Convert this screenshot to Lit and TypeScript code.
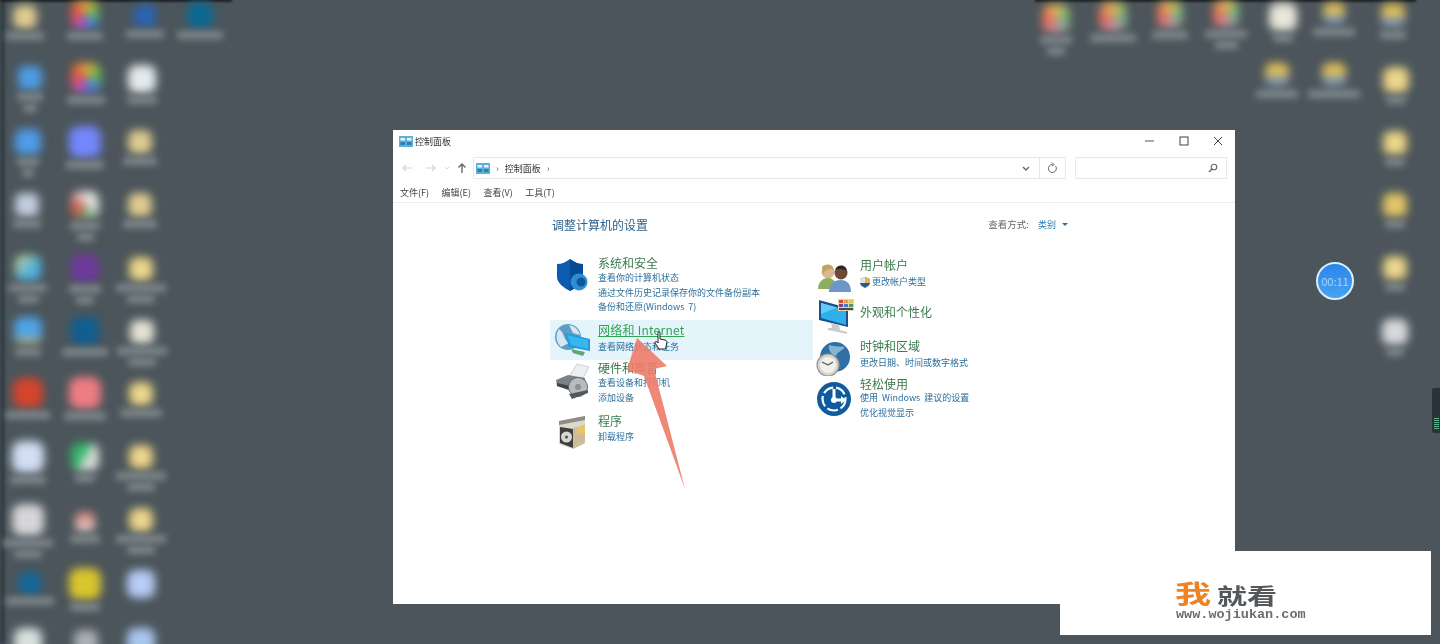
import { LitElement, html, css, svg, nothing } from 'lit';
import { customElement } from 'lit/decorators.js';

type Blob = { x: number; y: number; s: number; bg: string; w?: number; lines?: number };

const rainbow = 'conic-gradient(#e8a33c, #6cc04a, #3e7fe0, #c84fb0, #e2503c, #e8a33c)';
const chrome = 'conic-gradient(#e9c04d, #66b184, #c98fa0, #e3645a, #e9c04d)';
const yellow = 'radial-gradient(circle, #ecd88e 40%, #d8bd6c)';
const tan = 'radial-gradient(circle, #e0cd90 40%, #c9b98a)';
const person = 'linear-gradient(#e2c257 55%, #7f93ab 55%)';

// desktop icons, x/y are the centre of the icon itself
const blobs: Blob[] = [
  { x: 25, y: 17, s: 24, bg: tan, w: 38 },
  { x: 85, y: 15, s: 28, bg: rainbow, w: 36 },
  { x: 145, y: 16, s: 22, bg: '#2a64b4', w: 38 },
  { x: 200, y: 15, s: 26, bg: '#0a6a92', w: 46 },
  { x: 30, y: 78, s: 24, bg: '#4e9de4', w: 26, lines: 2 },
  { x: 86, y: 78, s: 30, bg: rainbow, w: 38 },
  { x: 142, y: 79, s: 28, bg: '#e4ebeb', w: 30 },
  { x: 28, y: 142, s: 26, bg: '#4f9ce8', w: 22, lines: 2 },
  { x: 85, y: 142, s: 32, bg: '#7387fb', w: 38 },
  { x: 140, y: 142, s: 24, bg: tan, w: 34 },
  { x: 27, y: 205, s: 24, bg: '#c3cde0', w: 28 },
  { x: 85, y: 205, s: 28, bg: 'conic-gradient(#ddd, #ddd 30%, #6fae7b 45%, #d9503f 70%, #ddd)', w: 30, lines: 2 },
  { x: 140, y: 205, s: 24, bg: tan, w: 34 },
  { x: 28, y: 268, s: 26, bg: 'linear-gradient(135deg, #d8d890, #4fb0dc 60%)', w: 38, lines: 2 },
  { x: 85, y: 268, s: 28, bg: '#6f3a9c', w: 32, lines: 2 },
  { x: 141, y: 269, s: 24, bg: yellow, w: 50, lines: 2 },
  { x: 28, y: 331, s: 28, bg: 'linear-gradient(#4ea4e8 60%, #c8a95a)', w: 26 },
  { x: 85, y: 331, s: 28, bg: '#0f5f92', w: 46 },
  { x: 142, y: 332, s: 24, bg: '#e3e2d3', w: 50, lines: 2 },
  { x: 28, y: 393, s: 30, bg: '#d5442b', w: 44 },
  { x: 85, y: 393, s: 32, bg: '#ee7d83', w: 42 },
  { x: 141, y: 394, s: 24, bg: yellow, w: 42 },
  { x: 28, y: 457, s: 32, bg: '#d2def4', w: 36 },
  { x: 85, y: 457, s: 28, bg: 'linear-gradient(120deg, #35b768 45%, #d8dcd8 55%)', w: 20 },
  { x: 141, y: 457, s: 24, bg: yellow, w: 50, lines: 2 },
  { x: 28, y: 520, s: 32, bg: '#d6d6d8', w: 50, lines: 2 },
  { x: 85, y: 522, s: 20, bg: 'linear-gradient(#d77f78, #e0d4cc)', w: 30 },
  { x: 141, y: 520, s: 24, bg: yellow, w: 50, lines: 2 },
  { x: 30, y: 583, s: 22, bg: '#12699b', w: 48 },
  { x: 85, y: 584, s: 32, bg: '#d8c52f', w: 30 },
  { x: 141, y: 584, s: 28, bg: '#b7ccf6', w: 0 },
  { x: 28, y: 642, s: 28, bg: '#d8e0de' },
  { x: 86, y: 642, s: 24, bg: '#aab0b4' },
  { x: 141, y: 642, s: 28, bg: '#a9c6ee' },
  { x: 1056, y: 19, s: 28, bg: chrome, w: 32, lines: 2 },
  { x: 1113, y: 17, s: 28, bg: chrome, w: 46 },
  { x: 1170, y: 15, s: 26, bg: chrome, w: 36 },
  { x: 1226, y: 14, s: 26, bg: chrome, w: 42, lines: 2 },
  { x: 1283, y: 17, s: 28, bg: '#e9e6da', w: 20 },
  { x: 1334, y: 14, s: 22, bg: person, w: 42 },
  { x: 1393, y: 16, s: 24, bg: person, w: 26 },
  { x: 1277, y: 75, s: 24, bg: person, w: 42 },
  { x: 1334, y: 75, s: 24, bg: person, w: 52 },
  { x: 1396, y: 80, s: 26, bg: yellow, w: 20 },
  { x: 1395, y: 143, s: 24, bg: yellow, w: 20 },
  { x: 1395, y: 205, s: 24, bg: '#e2c566', w: 20 },
  { x: 1395, y: 268, s: 24, bg: yellow, w: 20 },
  { x: 1395, y: 332, s: 26, bg: '#d9d9dc', w: 18 },
];

const panelIcon = svg`<svg width="14" height="11" viewBox="0 0 14 11"><rect width="14" height="11" fill="#5fb0d8"/><rect x="1.5" y="2" width="4.5" height="2.5" fill="#e8f4fa"/><rect x="8" y="2" width="4.5" height="2.5" fill="#e8f4fa"/><rect x="1.5" y="6" width="4.5" height="3" fill="#2c7fae"/><rect x="8" y="6" width="4.5" height="3" fill="#2c7fae"/></svg>`;

const icons: Record<string, unknown> = {
  shield: svg`<svg width="36" height="36" viewBox="0 0 36 36">
    <path d="M3 6 C8 6 12 4 16 1 C20 4 24 6 29 6 V19 C29 25 22 30 16 33 C10 30 3 25 3 19 Z" fill="#0b5cb0"/>
    <path d="M16 1 C20 4 24 6 29 6 V19 C29 25 22 30 16 33 Z" fill="#084a94"/>
    <circle cx="25" cy="24" r="8.5" fill="#2b8ed6"/>
    <circle cx="27" cy="24" r="4.5" fill="#0f5a96"/>
  </svg>`,
  network: svg`<svg width="38" height="34" viewBox="0 0 38 34">
    <circle cx="15" cy="14" r="13" fill="#5e9dc6"/>
    <path d="M6 6 C12 10 10 17 16 20 L8 24 C3 19 2 12 6 6 Z M16 2 C22 3 26 7 27 12 L20 10 Z" fill="#d7e7ef"/>
    <path d="M12 10 L37 16 V28 L16 24 Z" fill="#1f9be0"/>
    <path d="M14 12 L35 17 V26 L18 22 Z" fill="#38b6f0"/>
    <path d="M18 26 L32 29 L30 33 L20 30 Z" fill="#5aa878"/>
  </svg>`,
  printer: svg`<svg width="36" height="36" viewBox="0 0 36 36">
    <path d="M14 14 L22 1 L34 4 L27 17 Z" fill="#eceef0" stroke="#b4b8bc" stroke-width=".6"/>
    <path d="M1 17 L13 12 L30 15 L31 23 L16 28 L2 23 Z" fill="#7c8186"/>
    <path d="M2 20 L15 23 L15 27 L2 23 Z" fill="#3f4448"/>
    <circle cx="23" cy="24" r="9.5" fill="#b9bcbf" stroke="#66696c"/>
    <circle cx="23" cy="24" r="3" fill="#8d9093"/>
    <path d="M14 31 L33 27 L33 30 L17 36 Z" fill="#54585c"/>
  </svg>`,
  program: svg`<svg width="28" height="33" viewBox="0 0 28 33">
    <path d="M1 5 L27 0 V27 L15 33 L1 28 Z" fill="#ddd9cf"/>
    <path d="M1 5 L27 0 V4 L1 9 Z" fill="#8f8c84"/>
    <path d="M15 12 L27 9 V27 L15 33 Z" fill="#c9bd9a"/>
    <path d="M19 12 L27 10 V17 L19 19 Z" fill="#ecc35c"/>
    <path d="M2 11 L15 13 V32 L2 27 Z" fill="#3d3e3e"/>
    <circle cx="8.5" cy="21" r="5.5" fill="#d6d6d2"/>
    <circle cx="8.5" cy="21" r="1.6" fill="#55564f"/>
  </svg>`,
  users: svg`<svg width="33" height="28" viewBox="0 0 33 28">
    <circle cx="10" cy="8" r="6.5" fill="#d9b98c"/>
    <path d="M4 3 C8 -1 15 0 16 6 L14 5 C10 5 7 6 5 10 Z" fill="#c4a35c"/>
    <path d="M0 25 C0 17 6 14 10 14 C15 14 19 18 19 25 Z" fill="#8fae5c"/>
    <circle cx="23" cy="9" r="6.5" fill="#6e4a34"/>
    <path d="M17 6 C19 0 28 0 29 7 C27 5 20 4 17 6 Z" fill="#2f2622"/>
    <path d="M11 28 C11 19 17 16 23 16 C29 16 33 20 33 28 Z" fill="#6c97c8"/>
  </svg>`,
  monitor: svg`<svg width="35" height="35" viewBox="0 0 35 35">
    <path d="M0 1 L29 9 V28 L0 21 Z" fill="#1d4f8a"/>
    <path d="M2 4 L27 11 V26 L2 19 Z" fill="#2fb0ec"/>
    <path d="M2 4 L18 8.5 L2 15 Z" fill="#63cbf3"/>
    <path d="M12 24 L20 26 L21 31 L28 33 L28 35 L9 31 L9 29 L13 29 Z" fill="#c8ccd0"/>
    <rect x="19" y="0" width="16" height="12" fill="#e9d3a8"/>
    <rect x="20" y="1" width="4" height="3" fill="#d8473a"/>
    <rect x="25" y="1" width="4" height="3" fill="#e7a03b"/>
    <rect x="30" y="1" width="4" height="3" fill="#e9c64a"/>
    <rect x="20" y="5" width="4" height="3" fill="#7b3f98"/>
    <rect x="25" y="5" width="4" height="3" fill="#3f7fc0"/>
    <rect x="30" y="5" width="4" height="3" fill="#4f9f5c"/>
    <rect x="20" y="9" width="14" height="2" fill="#3b4a70"/>
  </svg>`,
  clock: svg`<svg width="35" height="34" viewBox="0 0 35 34">
    <circle cx="19" cy="15" r="15" fill="#2f6fa6"/>
    <path d="M13 3 C19 5 24 4 29 5 C26 9 22 9 20 14 C16 13 12 9 13 3 Z" fill="#85b5d2"/>
    <circle cx="12" cy="23" r="11" fill="#d8d5cf" stroke="#9a9792" stroke-width="1.2"/>
    <circle cx="12" cy="23" r="8" fill="#f2f0ec"/>
    <path d="M12 23 L6 20 M12 23 L17 20" stroke="#55504a" stroke-width="1.2"/>
  </svg>`,
  access: svg`<svg width="34" height="34" viewBox="0 0 34 34">
    <circle cx="17" cy="17" r="17" fill="#105a9e"/>
    <circle cx="17" cy="17" r="11.5" fill="none" stroke="#fff" stroke-width="2.2" stroke-dasharray="11 3"/>
    <path d="M17 7 V18 H27" fill="none" stroke="#fff" stroke-width="3"/>
    <path d="M24 14 L29 18 L24 22 Z" fill="#fff"/>
    <circle cx="17" cy="18" r="3" fill="#fff"/>
  </svg>`,
};

type Cat = {
  icon: string; iconTop: number; iconLeft: number; h: number; pad: number; gap?: number;
  title: string; hover?: boolean; subs: string[];
};

const leftCats: Cat[] = [
  { icon: 'shield', iconTop: 5, iconLeft: 4, h: 67, pad: 2, gap: 1, title: '系统和安全',
    subs: ['查看你的计算机状态', '通过文件历史记录保存你的文件备份副本', '备份和还原(Windows 7)'] },
  { icon: 'network', iconTop: 3, iconLeft: 3, h: 40, pad: 2, gap: 3, title: '网络和 Internet', hover: true,
    subs: ['查看网络状态和任务'] },
  { icon: 'printer', iconTop: 3, iconLeft: 5, h: 52, pad: 0, gap: 1, title: '硬件和声音',
    subs: ['查看设备和打印机', '添加设备'] },
  { icon: 'program', iconTop: 4, iconLeft: 8, h: 40, pad: 1, gap: 2, title: '程序', subs: ['卸载程序'] },
];

const rightCats: Cat[] = [
  { icon: 'users', iconTop: 7, iconLeft: 5, h: 43, pad: 0, gap: 3, title: '用户帐户', subs: ['更改帐户类型'] },
  { icon: 'monitor', iconTop: -1, iconLeft: 6, h: 38, pad: 4, title: '外观和个性化', subs: [] },
  { icon: 'clock', iconTop: 4, iconLeft: 3, h: 38, pad: 0, gap: 3, title: '时钟和区域', subs: ['更改日期、时间或数字格式'] },
  { icon: 'access', iconTop: 6, iconLeft: 4, h: 50, pad: 0, title: '轻松使用', subs: ['使用 Windows 建议的设置', '优化视觉显示'] },
];

@customElement('app-root')
export class AppRoot extends LitElement {
  static styles = css`
    :host {
      display: block;
      font-family: 'Noto Sans CJK SC', 'Liberation Sans', sans-serif;
    }
    .desktop {
      position: relative;
      width: 1440px;
      height: 644px;
      overflow: hidden;
      background: #4b555b;
    }
    .edge {
      position: absolute;
      left: 0;
      top: 0;
      bottom: 0;
      width: 5px;
      background: #343e46;
      filter: blur(1.5px);
    }
    .topbar {
      position: absolute;
      top: -2px;
      height: 4px;
      background: #1e2327;
      filter: blur(1px);
    }
    .blob {
      position: absolute;
      display: flex;
      flex-direction: column;
      align-items: center;
      gap: 5px;
      transform: translate(-50%, 0);
    }
    .blob-icon {
      border-radius: 30%;
      filter: blur(5px);
    }
    .blob-label {
      height: 8px;
      border-radius: 2px;
      background: #80888c;
      filter: blur(3.5px);
      margin-top: -2px;
    }

    .window {
      position: absolute;
      left: 393px;
      top: 130px;
      width: 842px;
      height: 474px;
      background: #fff;
      display: flex;
      flex-direction: column;
      color: #444;
      filter: blur(0.5px);
    }
    .titlebar {
      height: 22px;
      display: flex;
      align-items: center;
      gap: 2px;
      padding-left: 6px;
      font-size: 9px;
      color: #333;
    }
    .win-ctrls {
      margin-left: auto;
      display: flex;
    }
    .win-ctrls svg {
      display: block;
      width: 34px;
      height: 22px;
    }
    .navrow {
      height: 22px;
      margin-top: 5px;
      display: flex;
      align-items: center;
    }
    .arrows {
      width: 80px;
      height: 22px;
      flex: none;
    }
    .address {
      width: 593px;
      height: 22px;
      box-sizing: border-box;
      border: 1px solid #e6e8ea;
      display: flex;
      align-items: center;
      padding-left: 2px;
      font-size: 9px;
      color: #333;
    }
    .crumb {
      margin: 0 6px;
      color: #666;
      font-size: 9px;
    }
    .addr-btn {
      margin-left: auto;
      display: flex;
      align-items: center;
      height: 100%;
    }
    .addr-chev {
      width: 24px;
      height: 20px;
      display: block;
    }
    .addr-refresh {
      width: 25px;
      height: 20px;
      display: block;
      border-left: 1px solid #e6e8ea;
    }
    .search {
      width: 152px;
      height: 22px;
      margin-left: 9px;
      box-sizing: border-box;
      border: 1px solid #e6e8ea;
      display: flex;
      justify-content: flex-end;
      align-items: center;
      padding-right: 8px;
    }
    .menu {
      height: 19px;
      margin-top: 4px;
      border-bottom: 1px solid #ebeced;
      display: flex;
      align-items: center;
      gap: 12.5px;
      padding-left: 7px;
      font-size: 9px;
      color: #444;
    }
    .body {
      flex: 1;
      padding: 13px 0 0 157px;
    }
    .head {
      width: 518px;
      display: flex;
      align-items: center;
      justify-content: space-between;
      padding-left: 2px;
      box-sizing: border-box;
      height: 16px;
    }
    .head h1 {
      margin: 0;
      font-size: 12px;
      font-weight: 400;
      color: #2f628f;
    }
    .view {
      display: flex;
      align-items: center;
      font-size: 9.5px;
      color: #666;
      gap: 9px;
    }
    .view b {
      font-weight: 400;
      color: #2a7ab0;
      font-size: 9px;
    }
    .caret {
      width: 0;
      height: 0;
      border: 3px solid transparent;
      border-top: 3.5px solid #2a6f9e;
      border-bottom: 0;
      margin-left: -3px;
    }
    .cols {
      display: flex;
      margin-top: 21px;
    }
    .col {
      width: 263px;
      display: flex;
      flex-direction: column;
    }
    .col.right {
      margin-top: 4px;
    }
    .cat {
      display: flex;
      box-sizing: border-box;
    }
    .cat.hover {
      background: #e5f3fb;
    }
    .cat-icon {
      width: 48px;
      flex: none;
      box-sizing: border-box;
    }
    .col.right .cat-icon {
      width: 47px;
    }
    .cat-icon svg {
      display: block;
    }
    .cat-title {
      font-size: 12px;
      line-height: 15px;
      color: #3b7a4e;
    }
    .cat.hover .cat-title {
      color: #2ea752;
      text-decoration: underline;
      letter-spacing: 0.25px;
    }
    .cat-sub {
      font-size: 9px;
      line-height: 14.5px;
      color: #2c6f9b;
      display: flex;
      align-items: center;
      gap: 2px;
      white-space: nowrap;
      word-spacing: 2px;
    }

    .cursor {
      position: absolute;
      left: 654px;
      top: 331px;
      filter: blur(0.3px);
    }
    .arrow {
      position: absolute;
      left: 620px;
      top: 330px;
      filter: blur(0.5px);
    }
    .timer {
      position: absolute;
      left: 1316px;
      top: 262px;
      width: 38px;
      height: 38px;
      box-sizing: border-box;
      border: 2px solid #d9eefc;
      border-radius: 50%;
      background: linear-gradient(#2a86e8, #45a4f2);
      color: #a8d4f6;
      font-size: 11px;
      display: flex;
      align-items: center;
      justify-content: center;
    }
    .widget {
      position: absolute;
      left: 1432px;
      top: 388px;
      width: 8px;
      height: 45px;
      border-radius: 2px 0 0 2px;
      background: #2b3338;
      display: flex;
      flex-direction: column;
      justify-content: flex-end;
      gap: 1px;
      padding: 0 0 4px 2px;
      box-sizing: border-box;
    }
    .widget i {
      display: block;
      height: 1px;
      width: 5px;
      background: #5fae8c;
    }
    .mark {
      position: absolute;
      left: 1060px;
      top: 551px;
      width: 371px;
      height: 84px;
      background: #fff;
      box-sizing: border-box;
      padding: 29px 0 0 115px;
      filter: blur(0.4px);
    }
    .mark-top {
      display: flex;
      align-items: center;
      height: 28px;
    }
    .mark-wo {
      display: inline-block;
      font-size: 25px;
      line-height: 28px;
      font-weight: 700;
      color: #f08224;
      margin-right: 17px;
      transform: translateY(-2px) scaleX(1.44);
      transform-origin: left;
    }
    .mark-name {
      display: inline-block;
      font-size: 22px;
      line-height: 28px;
      font-weight: 700;
      color: #55585a;
      transform: scaleX(1.36);
      transform-origin: left;
    }
    .mark-url {
      font-family: 'Liberation Mono', monospace;
      font-size: 13.5px;
      line-height: 14px;
      font-weight: 700;
      color: #6a6d70;
      padding-left: 1px;
    }
  `;

  private renderCat(c: Cat) {
    return html`<div
      class="cat ${c.hover ? 'hover' : ''}"
      style="height:${c.h}px;padding-top:${c.pad}px"
    >
      <div class="cat-icon" style="padding-left:${c.iconLeft}px;margin-top:${c.iconTop - c.pad}px">
        ${icons[c.icon]}
      </div>
      <div>
        <div class="cat-title" style="margin-bottom:${c.gap ?? 0}px">${c.title}</div>
        ${c.subs.map(
          (s) => html`<div class="cat-sub">
            ${c.icon === 'users'
              ? svg`<svg width="10" height="11" viewBox="0 0 10 11"><path d="M5 0 L10 2 V6 C10 8 7 10 5 11 C3 10 0 8 0 6 V2 Z" fill="#2a5a8a"/><path d="M5 0 L10 2 V6 H5 Z" fill="#e4b83e"/><path d="M5 6 H0 V2 L5 0 Z" fill="#dfe4e8"/></svg>`
              : nothing}
            ${s}
          </div>`
        )}
      </div>
    </div>`;
  }

  render() {
    return html`<div class="desktop">
      <div class="edge"></div>
      <div class="topbar" style="left:0;width:232px"></div>
      <div class="topbar" style="left:1035px;width:381px"></div>
      ${blobs.map(
        (b) => html`<div class="blob" style="left:${b.x}px;top:${b.y - b.s / 2}px">
          <div class="blob-icon" style="width:${b.s}px;height:${b.s}px;background:${b.bg}"></div>
          ${b.w
            ? html`<div class="blob-label" style="width:${b.w}px"></div>
                ${b.lines === 2
                  ? html`<div class="blob-label" style="width:${Math.round(b.w * 0.55)}px"></div>`
                  : nothing}`
            : nothing}
        </div>`
      )}

      <div class="window">
        <div class="titlebar">
          ${panelIcon}<span>控制面板</span>
          <div class="win-ctrls">
            <svg viewBox="0 0 34 22"><path d="M12 11 H21" stroke="#555" stroke-width="1"/></svg>
            <svg viewBox="0 0 34 22"><rect x="13" y="7" width="8" height="8" fill="none" stroke="#444"/></svg>
            <svg viewBox="0 0 34 22"><path d="M13 7 L21 15 M21 7 L13 15" stroke="#444" stroke-width="1"/></svg>
          </div>
        </div>
        <div class="navrow">
          <svg class="arrows" viewBox="0 0 80 22">
            <path d="M19 11 H10 M13 8 L10 11 L13 14" fill="none" stroke="#d2d4d6" stroke-width="1.2"/>
            <path d="M33 11 H42 M39 8 L42 11 L39 14" fill="none" stroke="#d2d4d6" stroke-width="1.2"/>
            <path d="M52 10 L54 12 L56 10" fill="none" stroke="#d8dadc" stroke-width="1"/>
            <path d="M69 16 V7 M65.5 10.5 L69 7 L72.5 10.5" fill="none" stroke="#666" stroke-width="1.4"/>
          </svg>
          <div class="address">
            ${panelIcon}<span class="crumb">›</span><span>控制面板</span><span class="crumb">›</span>
            <div class="addr-btn">
              <svg class="addr-chev" viewBox="0 0 24 20"><path d="M8 9 L11 12 L14 9" fill="none" stroke="#666" stroke-width="1.4"/></svg>
              <svg class="addr-refresh" viewBox="0 0 25 20"><path d="M15.5 8 A4 4 0 1 1 12.5 6.5 M12 4.5 L14 6.5 L12 8" fill="none" stroke="#666" stroke-width="1"/></svg>
            </div>
          </div>
          <div class="search">
            <svg width="10" height="10" viewBox="0 0 10 10"><circle cx="6" cy="4" r="2.8" fill="none" stroke="#666" stroke-width="1.1"/><path d="M4 6 L1 9" stroke="#666" stroke-width="1.4"/></svg>
          </div>
        </div>
        <div class="menu">
          <span>文件(F)</span><span>编辑(E)</span><span>查看(V)</span><span>工具(T)</span>
        </div>
        <div class="body">
          <div class="head">
            <h1>调整计算机的设置</h1>
            <div class="view"><span>查看方式:</span><b>类别</b><span class="caret"></span></div>
          </div>
          <div class="cols">
            <div class="col">${leftCats.map((c) => this.renderCat(c))}</div>
            <div class="col right">${rightCats.map((c) => this.renderCat(c))}</div>
          </div>
        </div>
      </div>

      <svg class="arrow" width="70" height="162" viewBox="620 330 70 162">
        <path d="M637 338 L667 366 L654 369 L685 489 L644 376 L627 370 Z" fill="#ee7b69" fill-opacity=".9"/>
      </svg>
      <svg class="cursor" width="14" height="20" viewBox="0 0 14 20">
        <path d="M4 1.5 C4 .5 6 .5 6 1.5 V8 L11 9 C13 9.5 13 11 12.5 13 L11.5 18 H5 L1 12 C.5 11 1.5 10 3 11 L4 12 Z" fill="#fff" stroke="#222" stroke-width="1"/>
      </svg>

      <div class="timer">00:11</div>
      <div class="widget">${[0, 1, 2, 3, 4, 5].map(() => html`<i></i>`)}</div>

      <div class="mark">
        <div class="mark-top"><span class="mark-wo">我</span><span class="mark-name">就看</span></div>
        <div class="mark-url">www.wojiukan.com</div>
      </div>
    </div>`;
  }
}
